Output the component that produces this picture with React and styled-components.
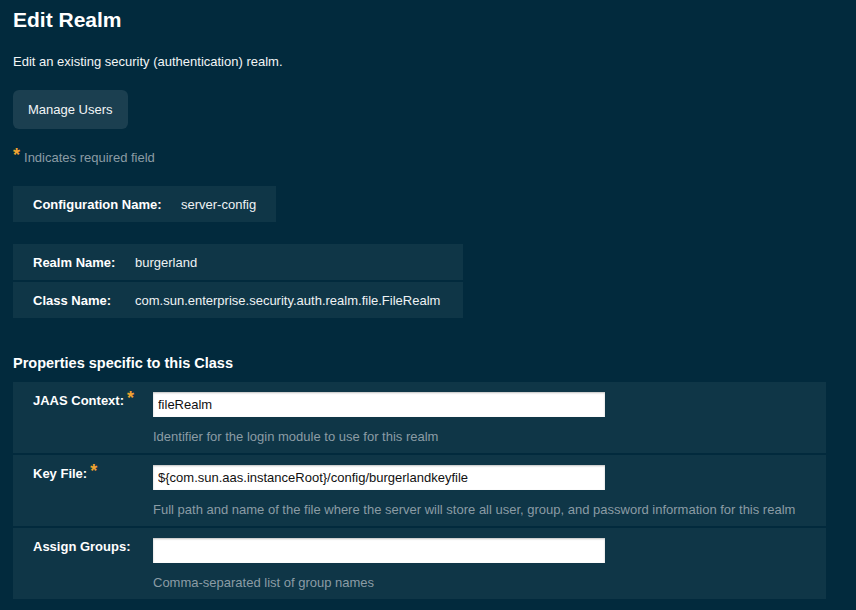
import React from "react";
import styled, { createGlobalStyle } from "styled-components";

const Global = createGlobalStyle`
  html, body { margin: 0; padding: 0; background: #022a3d; }
  body { font-family: "Liberation Sans", Arial, sans-serif; color: #ffffff; }
  * { box-sizing: border-box; }
`;

const Page = styled.div`
  padding: 8px 30px 20px 13px;
  min-height: 610px;
  background: #022a3d;
`;

const Title = styled.h1`
  margin: 0;
  font-size: 21px;
  line-height: 24px;
  font-weight: bold;
  color: #ffffff;
`;

const Description = styled.p`
  margin: 22px 0 0;
  font-size: 13px;
  line-height: 16px;
  color: #f2f5f6;
`;

const Button = styled.button`
  margin-top: 20px;
  height: 39px;
  padding: 0 15px;
  border: none;
  border-radius: 6px;
  background: #1b3f50;
  color: #f2f5f6;
  font-family: inherit;
  font-size: 13px;
  cursor: pointer;
`;

const Required = styled.div`
  margin-top: 21px;
  height: 16px;
  font-size: 13px;
  line-height: 16px;
  color: #8b9ca5;
  display: flex;
  align-items: flex-start;
  gap: 4px;
`;

const Star = styled.span`
  color: #f0a330;
  font-size: 18px;
  font-weight: bold;
  line-height: 18px;
  height: 16px;
  position: relative;
  top: ${(p) => p.$top || 0}px;
  margin-left: ${(p) => p.$ml || 0}px;
`;

const InfoTable = styled.div`
  margin-top: ${(p) => p.$mt}px;
  width: ${(p) => p.$w}px;
  display: flex;
  flex-direction: column;
  gap: 2px;
`;

const InfoRow = styled.div`
  height: 36px;
  background: #0f3647;
  display: grid;
  grid-template-columns: ${(p) => p.$label}px 1fr;
  align-items: center;
  padding-left: 20px;
  padding-top: 1px;
  font-size: 13px;
`;

const Label = styled.span`
  font-weight: bold;
  color: #ffffff;
  font-size: 13px;
  line-height: 16px;
`;

const Value = styled.span`
  color: #eef2f4;
`;

const SectionTitle = styled.h2`
  margin: 36px 0 0;
  font-size: 14.5px;
  line-height: 18px;
  font-weight: bold;
  color: #ffffff;
`;

const PropTable = styled.div`
  margin-top: 10px;
  width: 813px;
  display: flex;
  flex-direction: column;
  gap: 2px;
`;

const PropRow = styled.div`
  height: 71px;
  background: #0f3647;
  display: grid;
  grid-template-columns: 120px 1fr;
  padding: 10px 0 0 20px;
`;

const PropLabel = styled.div`
  padding-top: 1px;
  display: flex;
  align-items: flex-start;
`;

const Field = styled.div`
  display: flex;
  flex-direction: column;
`;

const Input = styled.input`
  width: 452px;
  height: 25px;
  border: none;
  outline: none;
  background: #ffffff;
  box-shadow: inset 0 1px 2px rgba(0, 0, 0, 0.25);
  padding: 0 5px;
  font-family: "Liberation Sans", Arial, sans-serif;
  font-size: 13px;
  color: #111;
`;

const Help = styled.div`
  margin-top: 12px;
  font-size: 13px;
  line-height: 16px;
  color: #8b9ca5;
`;

const props = [
  {
    label: "JAAS Context:",
    req: true,
    value: "fileRealm",
    help: "Identifier for the login module to use for this realm",
  },
  {
    label: "Key File:",
    req: true,
    value: "${com.sun.aas.instanceRoot}/config/burgerlandkeyfile",
    help: "Full path and name of the file where the server will store all user, group, and password information for this realm",
  },
  {
    label: "Assign Groups:",
    req: false,
    value: "",
    help: "Comma-separated list of group names",
  },
];

export default function App() {
  return (
    <>
      <Global />
      <Page>
        <Title>Edit Realm</Title>
        <Description>Edit an existing security (authentication) realm.</Description>
        <Button>Manage Users</Button>
        <Required>
          <Star $top={-4}>*</Star>
          <span>Indicates required field</span>
        </Required>
        <InfoTable $mt={20} $w={263}>
          <InfoRow $label={148}>
            <Label>Configuration Name:</Label>
            <Value>server-config</Value>
          </InfoRow>
        </InfoTable>
        <InfoTable $mt={22} $w={450}>
          <InfoRow $label={102}>
            <Label>Realm Name:</Label>
            <Value>burgerland</Value>
          </InfoRow>
          <InfoRow $label={102}>
            <Label>Class Name:</Label>
            <Value>com.sun.enterprise.security.auth.realm.file.FileRealm</Value>
          </InfoRow>
        </InfoTable>
        <SectionTitle>Properties specific to this Class</SectionTitle>
        <PropTable>
          {props.map((p) => (
            <PropRow key={p.label}>
              <PropLabel>
                <Label>{p.label}</Label>
                {p.req && <Star $top={-4} $ml={3}>*</Star>}
              </PropLabel>
              <Field>
                <Input defaultValue={p.value} />
                <Help>{p.help}</Help>
              </Field>
            </PropRow>
          ))}
        </PropTable>
      </Page>
    </>
  );
}
